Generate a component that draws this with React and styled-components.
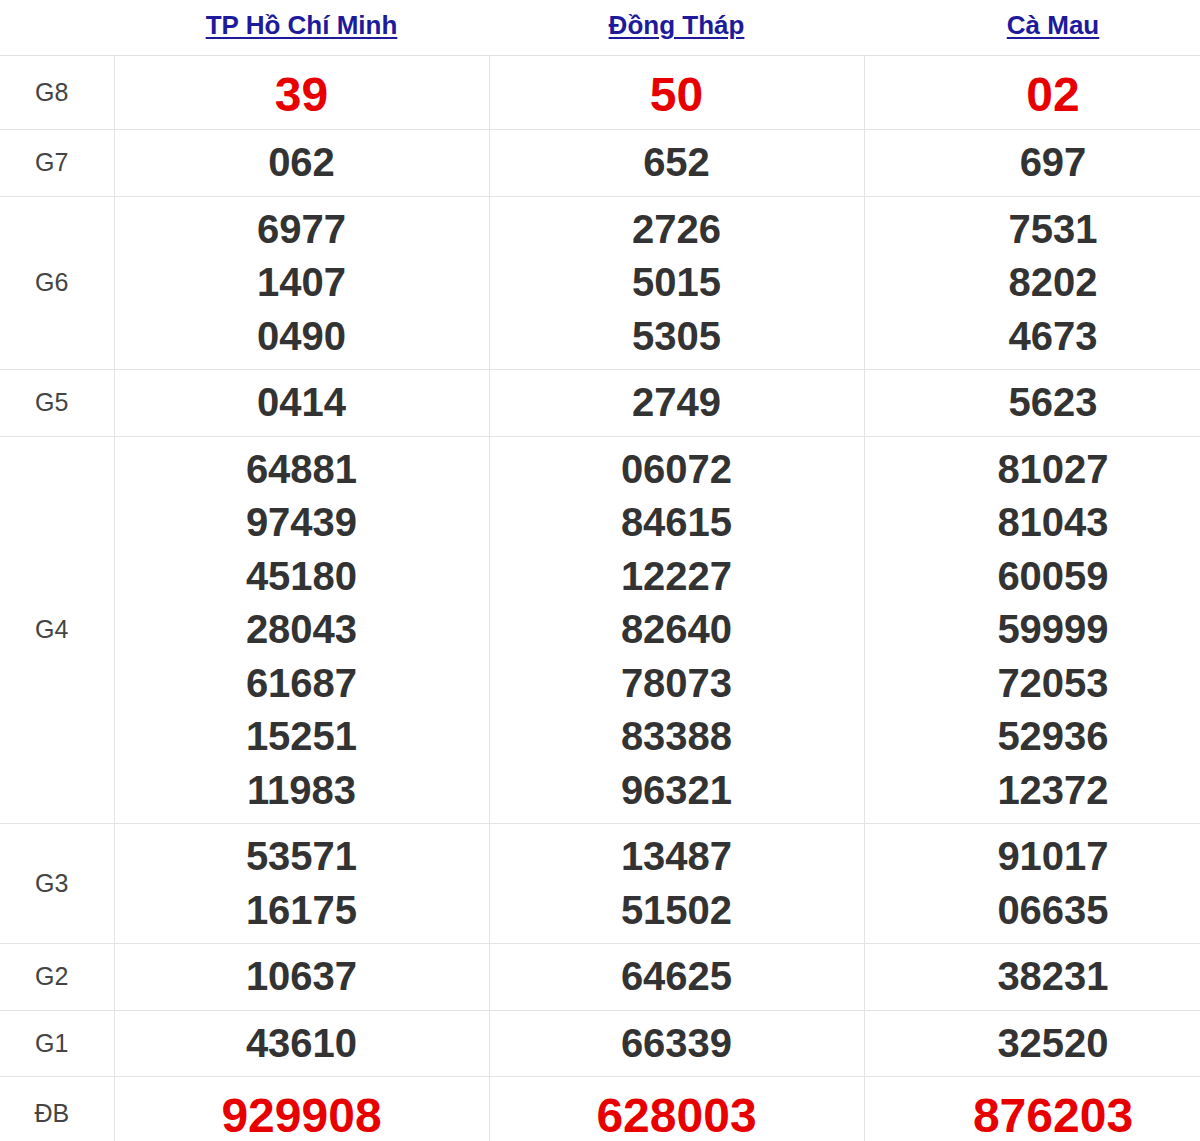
import React from 'react'
import styled, { createGlobalStyle } from 'styled-components'

const GlobalStyle = createGlobalStyle`
  html, body {
    margin: 0;
    padding: 0;
    background: #fff;
    overflow: hidden;
  }
  body {
    font-family: "Liberation Sans", Arial, sans-serif;
  }
`

const provinces = ['TP Hồ Chí Minh', 'Đồng Tháp', 'Cà Mau']

const prizes = [
  { name: 'G8', red: true, values: [['39'], ['50'], ['02']] },
  { name: 'G7', values: [['062'], ['652'], ['697']] },
  { name: 'G6', values: [['6977', '1407', '0490'], ['2726', '5015', '5305'], ['7531', '8202', '4673']] },
  { name: 'G5', values: [['0414'], ['2749'], ['5623']] },
  {
    name: 'G4',
    values: [
      ['64881', '97439', '45180', '28043', '61687', '15251', '11983'],
      ['06072', '84615', '12227', '82640', '78073', '83388', '96321'],
      ['81027', '81043', '60059', '59999', '72053', '52936', '12372'],
    ],
  },
  { name: 'G3', values: [['53571', '16175'], ['13487', '51502'], ['91017', '06635']] },
  { name: 'G2', values: [['10637'], ['64625'], ['38231']] },
  { name: 'G1', values: [['43610'], ['66339'], ['32520']] },
  { name: 'ĐB', red: true, values: [['929908'], ['628003'], ['876203']] },
]

export default function App() {
  return (
    <>
      <GlobalStyle />
      <Table>
        <colgroup>
          <Col $w={114} />
          <Col $w={375} />
          <Col $w={375} />
          <Col $w={378} />
        </colgroup>
        <thead>
          <tr>
            <HeadCell />
            {provinces.map((p) => (
              <HeadCell key={p}>
                <Province href="#">{p}</Province>
              </HeadCell>
            ))}
          </tr>
        </thead>
        <tbody>
          {prizes.map((row) => (
            <tr key={row.name}>
              <Label>{row.name}</Label>
              {row.values.map((list, i) => (
                <Cell key={i} $red={row.red}>
                  {list.map((n) => (
                    <Num key={n} $red={row.red}>{n}</Num>
                  ))}
                </Cell>
              ))}
            </tr>
          ))}
        </tbody>
      </Table>
    </>
  )
}

const Table = styled.table`
  width: 1242px;
  table-layout: fixed;
  border-collapse: collapse;
  border-spacing: 0;
`

const Col = styled.col`
  width: ${(p) => p.$w}px;
`

const HeadCell = styled.th`
  height: 50px;
  padding: 0 0 5px 0;
  text-align: center;
  vertical-align: middle;
  border-bottom: 1px solid #e0e0e0;
`

const Province = styled.a`
  font-size: 26px;
  font-weight: bold;
  color: #1e1a9c;
  text-decoration: underline;
  text-underline-offset: 3px;
  text-decoration-thickness: 2px;
`

const Label = styled.td`
  padding: 0 10px 0 0;
  text-align: center;
  vertical-align: middle;
  font-size: 25px;
  color: #444;
  border: 1px solid #e3e3e3;
  border-left: none;
`

const Cell = styled.td`
  padding: ${(p) => (p.$red ? '8px 0 4px' : '6px 0 6px')};
  text-align: center;
  vertical-align: top;
  border: 1px solid #e3e3e3;
`

const Num = styled.div`
  font-size: ${(p) => (p.$red ? '48px' : '40px')};
  line-height: ${(p) => (p.$red ? '61px' : '53.5px')};
  font-weight: bold;
  color: ${(p) => (p.$red ? '#e80000' : '#333')};
`
